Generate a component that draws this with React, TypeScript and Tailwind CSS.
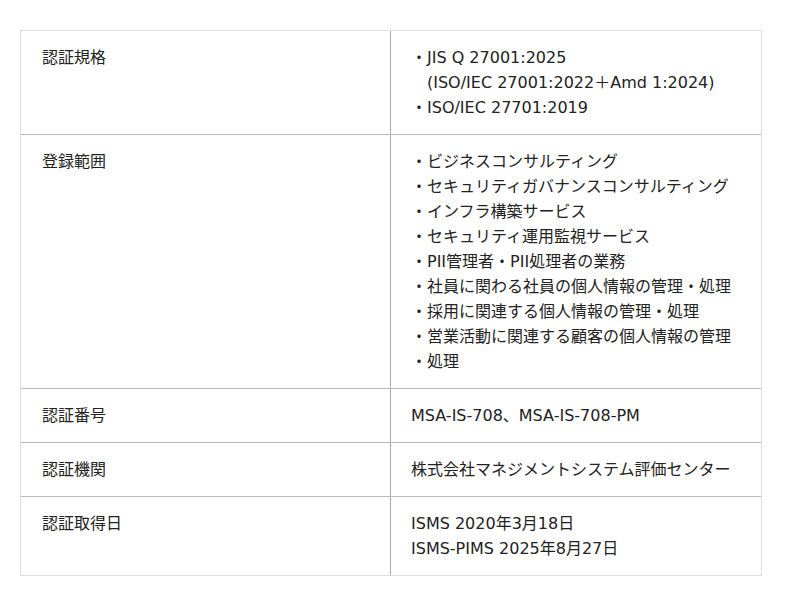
const rows: { label: string; lines: string[]; indent?: number[] }[] = [
  {
    label: '認証規格',
    lines: ['・JIS Q 27001:2025', '(ISO/IEC 27001:2022＋Amd 1:2024)', '・ISO/IEC 27701:2019'],
    indent: [1],
  },
  {
    label: '登録範囲',
    lines: [
      '・ビジネスコンサルティング',
      '・セキュリティガバナンスコンサルティング',
      '・インフラ構築サービス',
      '・セキュリティ運用監視サービス',
      '・PII管理者・PII処理者の業務',
      '・社員に関わる社員の個人情報の管理・処理',
      '・採用に関連する個人情報の管理・処理',
      '・営業活動に関連する顧客の個人情報の管理',
      '・処理',
    ],
  },
  { label: '認証番号', lines: ['MSA-IS-708、MSA-IS-708-PM'] },
  { label: '認証機関', lines: ['株式会社マネジメントシステム評価センター'] },
  { label: '認証取得日', lines: ['ISMS 2020年3月18日', 'ISMS-PIMS 2025年8月27日'] },
];

export default function App() {
  return (
    <div className="min-h-[606px] bg-white pt-[30px] pl-[20px] font-['DejaVu_Sans','Noto_Sans_CJK_JP',sans-serif] text-[16px] leading-[25px] text-[#222]">
      <div className="w-[742px] border border-[#ddd]">
        {rows.map((row, i) => (
          <div key={row.label} className={`grid grid-cols-2 ${i > 0 ? 'border-t border-[#bbb]' : ''}`}>
            <div className="border-r border-[#aaa] px-[21px] py-[14px]">{row.label}</div>
            <div className="px-[20px] py-[14px]">
              {row.lines.map((line, j) => (
                <div key={j} className={row.indent?.includes(j) ? 'pl-[16px]' : ''}>
                  {line}
                </div>
              ))}
            </div>
          </div>
        ))}
      </div>
    </div>
  );
}
